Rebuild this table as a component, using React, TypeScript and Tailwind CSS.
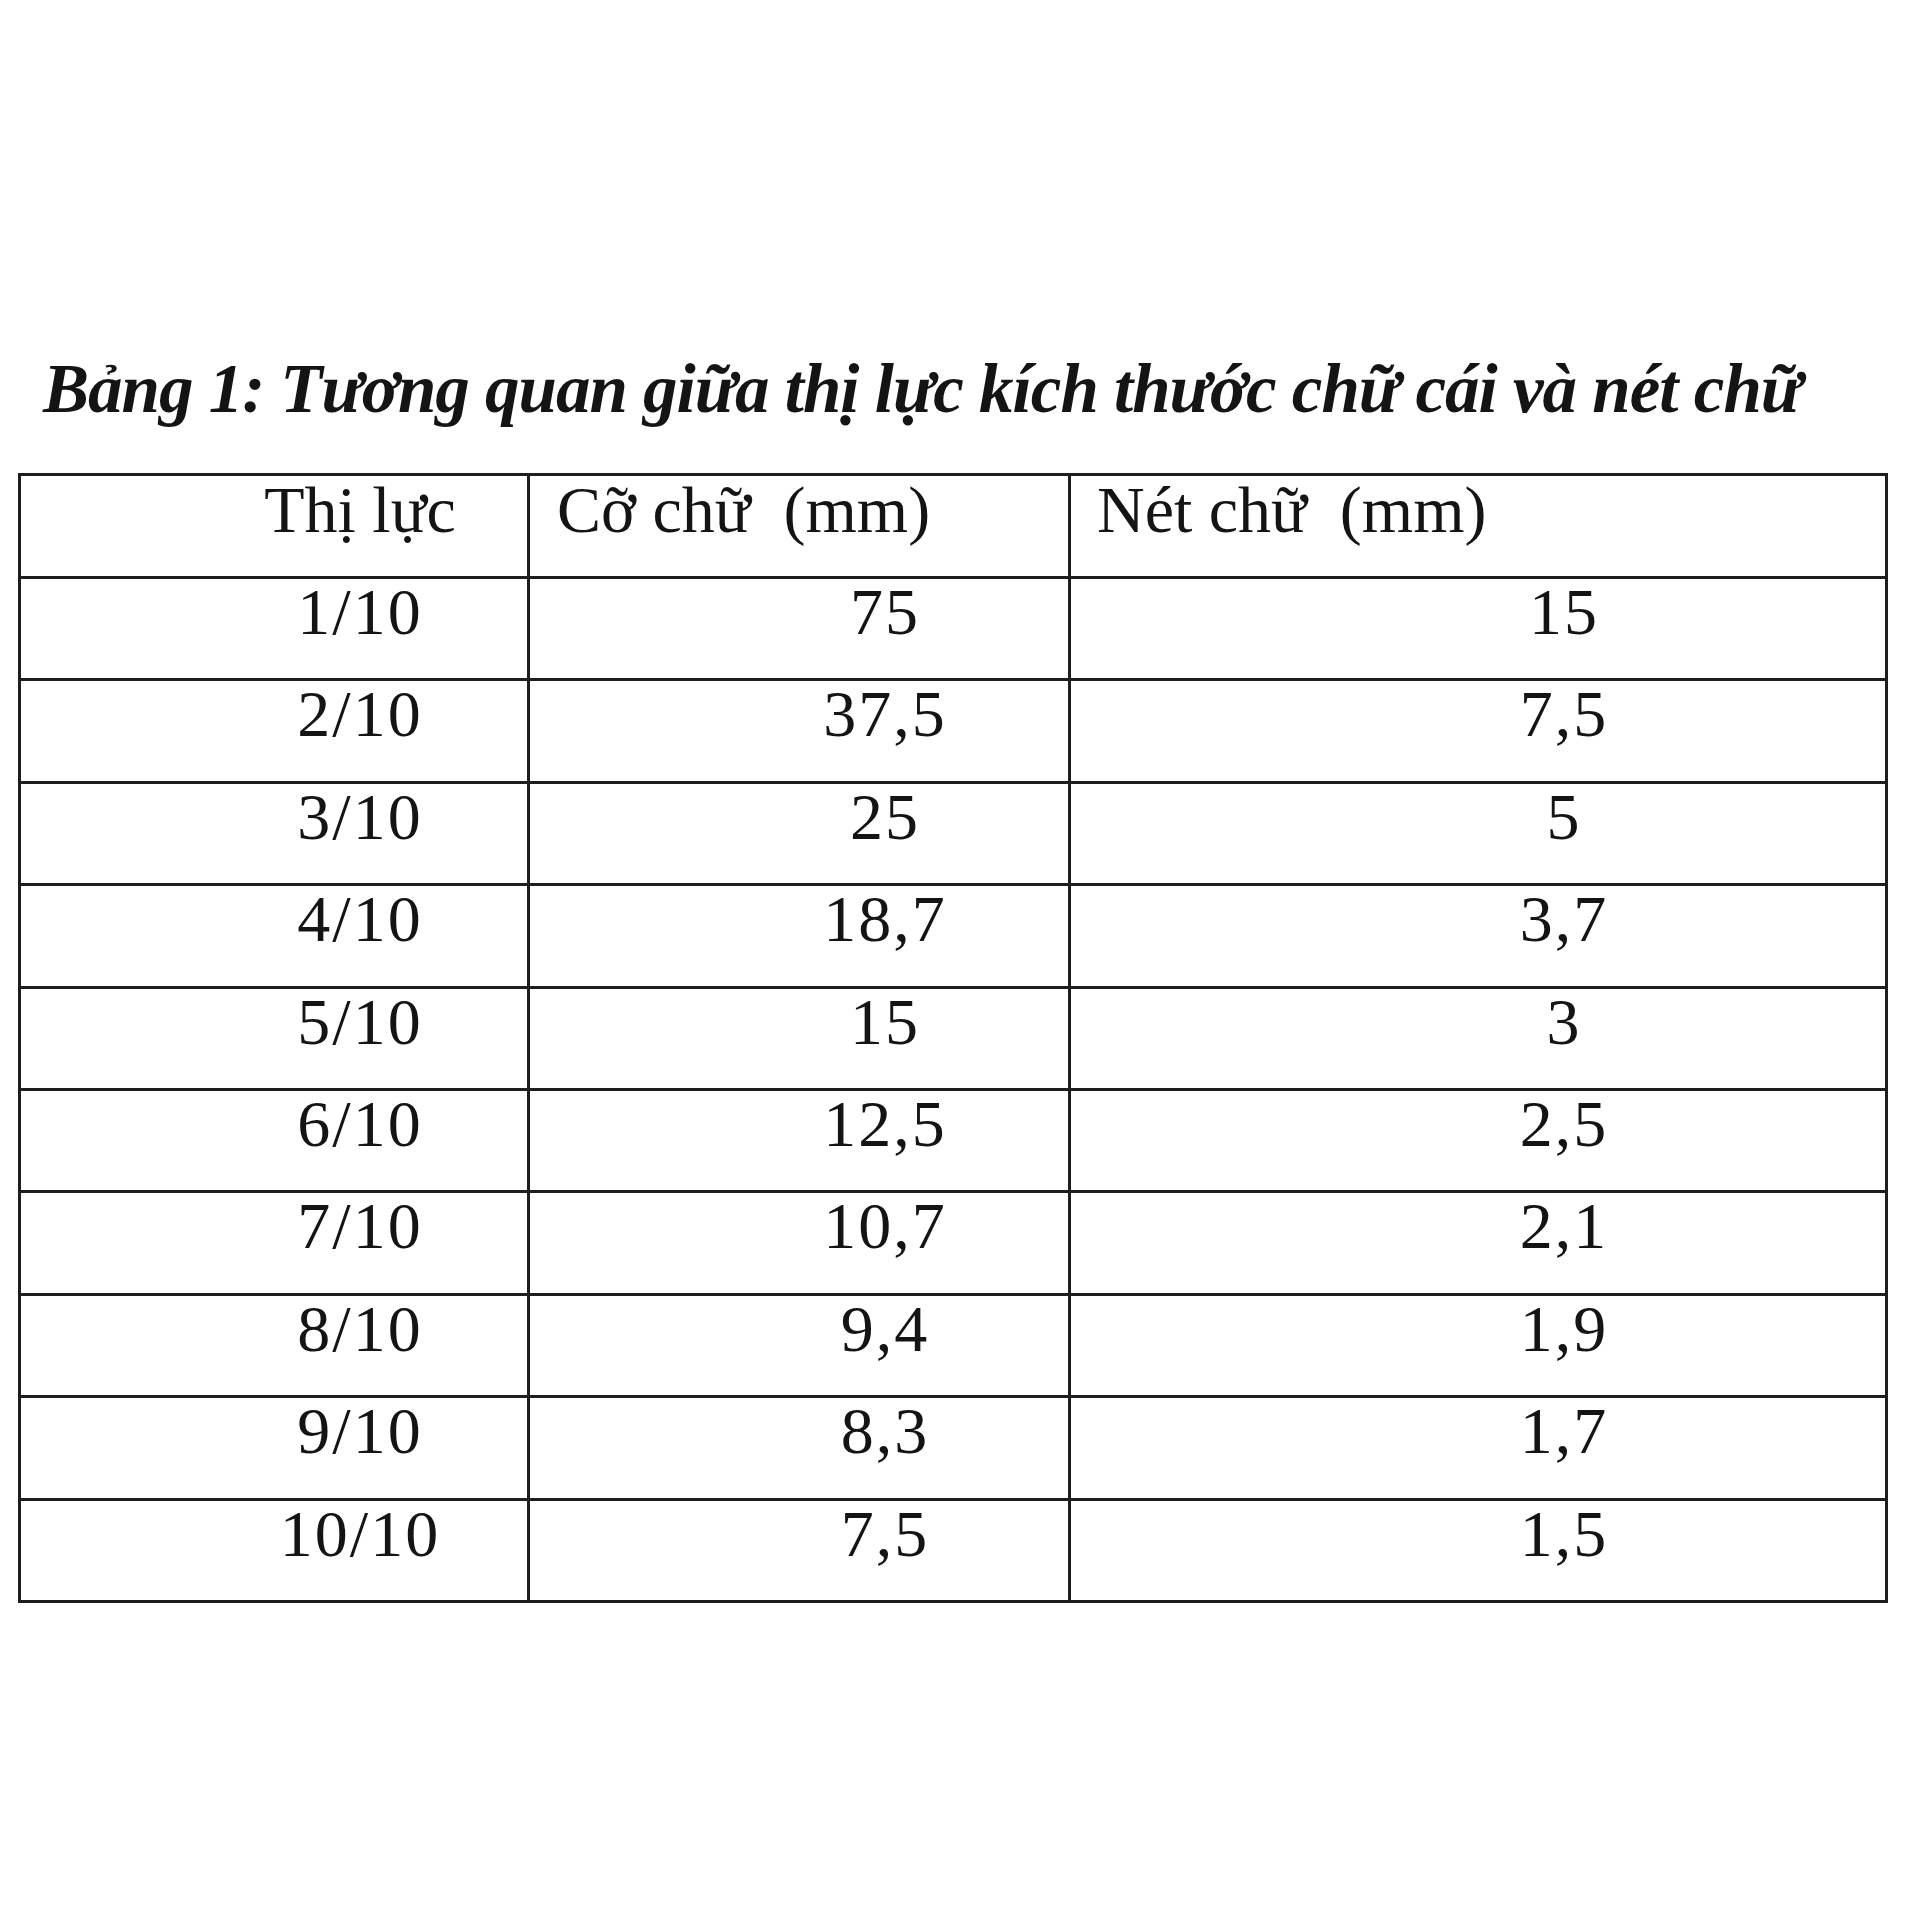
const rows: [string, string, string][] = [
  ["1/10", "75", "15"],
  ["2/10", "37,5", "7,5"],
  ["3/10", "25", "5"],
  ["4/10", "18,7", "3,7"],
  ["5/10", "15", "3"],
  ["6/10", "12,5", "2,5"],
  ["7/10", "10,7", "2,1"],
  ["8/10", "9,4", "1,9"],
  ["9/10", "8,3", "1,7"],
  ["10/10", "7,5", "1,5"],
];

const serif = { fontFamily: '"Liberation Serif", "Times New Roman", serif' };

export default function App() {
  return (
    <div className="w-[1920px] h-[1920px] bg-white text-[#141414]" style={serif}>
      {/* Title */}
      <div className="pt-[349px] pl-[43px]">
        <h1 className="text-[69px] leading-[80px] font-bold italic tracking-[-1px] whitespace-nowrap">
          Bảng 1: Tương quan giữa thị lực kích thước chữ cái và nét chữ
        </h1>
      </div>

      {/* Table */}
      <div className="ml-[18px] mt-[44px] w-[1870px] border-[3px] border-[#1e1e1e]">
        <div className="grid grid-cols-[509px_541px_1fr] h-[100px] text-[66px] leading-none">
          <div className="flex items-center justify-center pl-[172px] pb-[32px] border-r-[3px] border-[#1e1e1e]">
            Thị lực
          </div>
          <div className="flex items-center pl-[27px] pb-[32px] border-r-[3px] border-[#1e1e1e] whitespace-pre">
            Cỡ chữ  (mm)
          </div>
          <div className="flex items-center pl-[26px] pb-[32px] whitespace-pre">
            Nét chữ  (mm)
          </div>
        </div>
        {rows.map(([a, b, c]) => (
          <div
            key={a}
            className="grid grid-cols-[509px_541px_1fr] h-[102.4px] text-[66px] leading-none tracking-[2px] border-t-[3px] border-[#1e1e1e]"
          >
            <div className="flex items-center justify-center pl-[172px] pb-[34px] border-r-[3px] border-[#1e1e1e]">
              {a}
            </div>
            <div className="flex items-center justify-center pl-[172px] pb-[34px] border-r-[3px] border-[#1e1e1e]">
              {b}
            </div>
            <div className="flex items-center justify-center pl-[172px] pb-[34px]">
              {c}
            </div>
          </div>
        ))}
      </div>
    </div>
  );
}
